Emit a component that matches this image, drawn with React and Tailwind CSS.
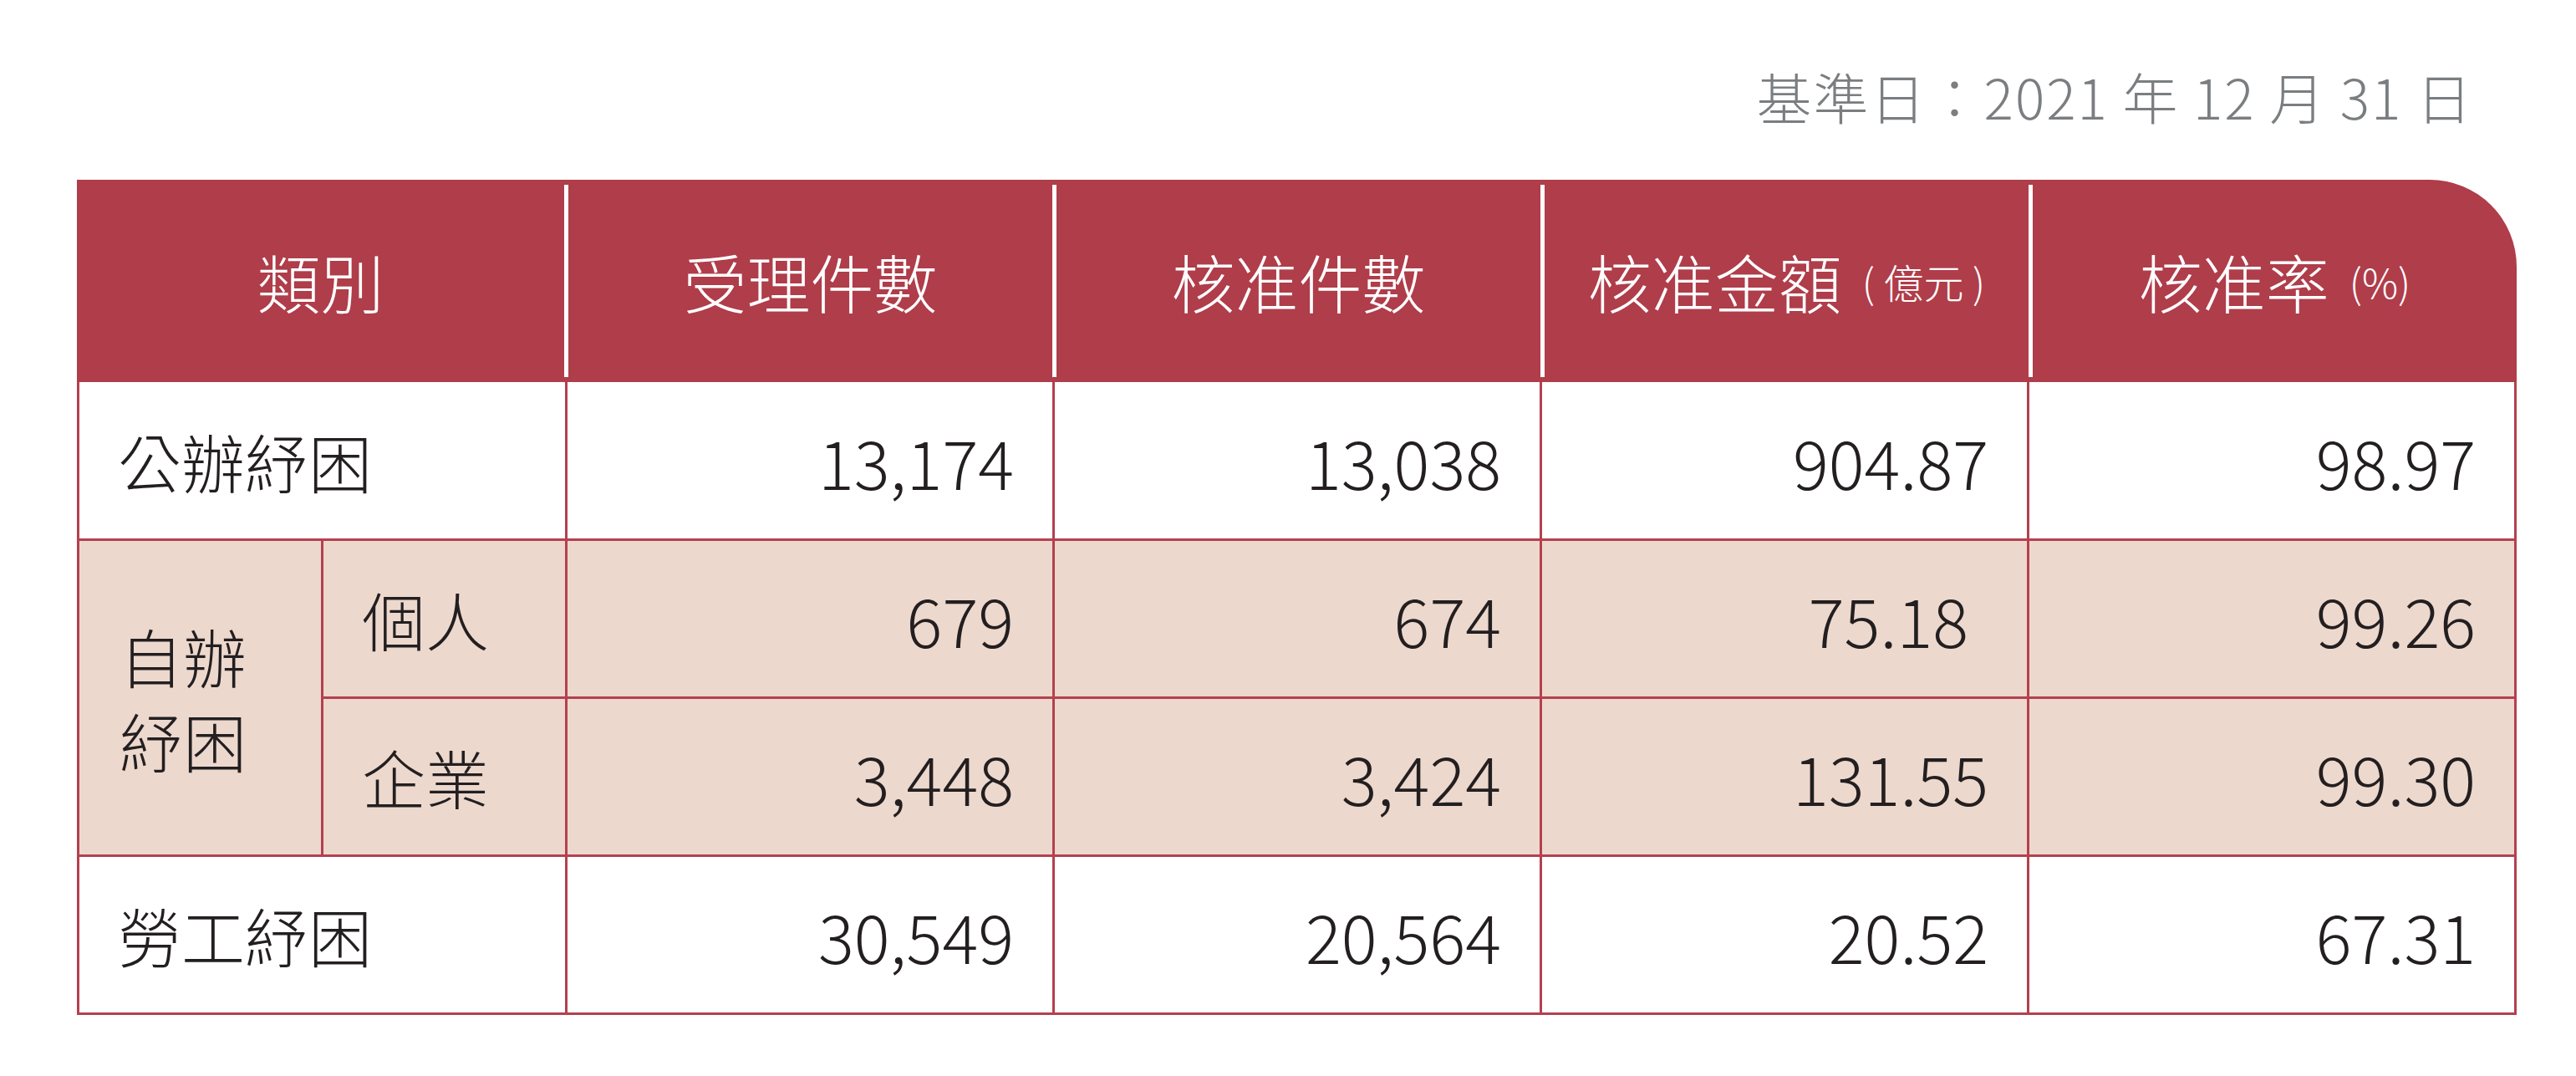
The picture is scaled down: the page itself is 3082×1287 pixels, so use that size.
const rows = [
  { label: '公辦紓困', values: ['13,174', '13,038', '904.87', '98.97'] },
  { label: '個人', values: ['679', '674', '75.18', '99.26'] },
  { label: '企業', values: ['3,448', '3,424', '131.55', '99.30'] },
  { label: '勞工紓困', values: ['30,549', '20,564', '20.52', '67.31'] },
];

function NumCell({ value, pink, shift }) {
  return (
    <div
      className={`flex items-center justify-end text-[80px] ${shift ? 'pr-[70px]' : 'pr-[46px]'} ${
        pink ? 'bg-[#edd8ce]' : 'bg-white'
      }`}
    >
      {value}
    </div>
  );
}

function HeadCell({ children }) {
  return (
    <div className="flex-1 my-[6px] border-l-[5px] border-white flex items-center justify-center">
      {children}
    </div>
  );
}

export default function App() {
  return (
    <div className="w-[3082px] h-[1287px] bg-white font-['Noto_Sans_CJK_TC','Noto_Sans_CJK_SC',sans-serif] font-light text-[#231f20]">
      <div className="ml-[92px] w-[2919px] pt-[74px]">
        {/* 基準日 */}
        <div className="text-right pr-[52px] text-[66px] tracking-[2px] leading-[80px] text-[#7b7e80]">
          基準日：2021 年 12 月 31 日
        </div>

        {/* header */}
        <div className="mt-[61px] flex h-[242px] bg-[#af3d4a] rounded-tr-[104px] text-white text-[76px] leading-none">
          <div className="w-[583px] flex items-center justify-center">類別</div>
          <HeadCell>受理件數</HeadCell>
          <HeadCell>核准件數</HeadCell>
          <HeadCell>
            核准金額
            <span className="ml-[24px] text-[48px]">( 億元 )</span>
          </HeadCell>
          <HeadCell>
            核准率
            <span className="ml-[24px] text-[48px]">(%)</span>
          </HeadCell>
        </div>

        {/* body */}
        <div className="grid grid-cols-[289px_289px_repeat(4,minmax(0,1fr))] grid-rows-[187px_186px_186px_186px] gap-[3px] bg-[#b5404e] px-[3px] pb-[3px] text-[76px] leading-none">
          <div className="col-span-2 bg-white flex items-center pl-[46px]">{rows[0].label}</div>
          {rows[0].values.map((v) => (
            <NumCell key={v} value={v} />
          ))}

          <div className="row-span-2 bg-[#edd8ce] flex items-center pl-[48px] leading-[101px]">
            自辦
            <br />
            紓困
          </div>
          <div className="bg-[#edd8ce] flex items-center pl-[46px]">{rows[1].label}</div>
          {rows[1].values.map((v, i) => (
            <NumCell key={v} value={v} pink shift={i === 2} />
          ))}

          <div className="bg-[#edd8ce] flex items-center pl-[46px]">{rows[2].label}</div>
          {rows[2].values.map((v) => (
            <NumCell key={v} value={v} pink />
          ))}

          <div className="col-span-2 bg-white flex items-center pl-[46px]">{rows[3].label}</div>
          {rows[3].values.map((v) => (
            <NumCell key={v} value={v} />
          ))}
        </div>
      </div>
    </div>
  );
}
